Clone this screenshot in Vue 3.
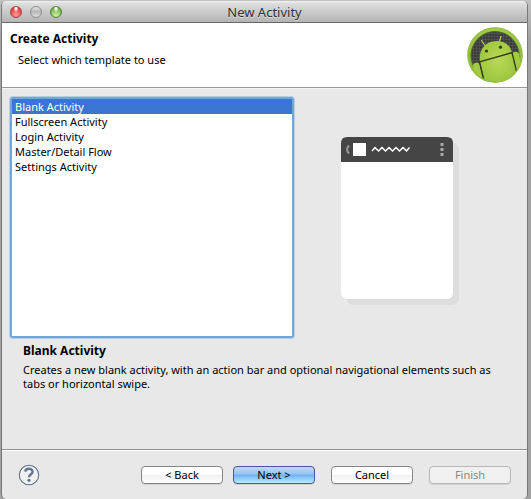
<script setup>
import { ref, computed } from 'vue'

const templates = [
  {
    name: 'Blank Activity',
    text: 'Creates a new blank activity, with an action bar and optional navigational elements such as tabs or horizontal swipe.',
  },
  { name: 'Fullscreen Activity', text: '' },
  { name: 'Login Activity', text: '' },
  { name: 'Master/Detail Flow', text: '' },
  { name: 'Settings Activity', text: '' },
]
const selected = ref('Blank Activity')
const current = computed(() => templates.find((t) => t.name === selected.value))
</script>

<template>
  <div class="desktop">
    <main class="window">
      <div class="titlebar">
        <div class="lights">
          <button class="light red" type="button"></button>
          <button class="light gray" type="button"></button>
          <button class="light green" type="button"></button>
        </div>
        <span class="title">New Activity</span>
      </div>

      <header class="header">
        <div>
          <h1 id="heading">Create Activity</h1>
          <label class="hint" for="template-list">Select which template to use</label>
        </div>
        <svg class="logo" viewBox="0 0 56 56">
          <defs>
            <linearGradient id="ring" x1="0" y1="0" x2="0" y2="1">
              <stop offset="0" stop-color="#a6cc48" />
              <stop offset="1" stop-color="#7fa92f" />
            </linearGradient>
            <radialGradient id="body" cx="0.5" cy="0.45" r="0.65">
              <stop offset="0" stop-color="#b9d958" />
              <stop offset="1" stop-color="#98c238" />
            </radialGradient>
            <pattern id="mesh" width="3" height="3" patternUnits="userSpaceOnUse">
              <rect width="3" height="3" fill="#3b3b3b" />
              <path d="M0 0H3M0 0V3" stroke="#5c5c5c" stroke-width="1" />
            </pattern>
            <clipPath id="disc"><circle cx="28" cy="28" r="27.500" /></clipPath>
          </defs>
          <circle cx="28" cy="28" r="27.500" fill="url(#ring)" />
          <circle cx="28" cy="28.500" r="24" fill="url(#mesh)" stroke="#4c6a20" />
          <g clip-path="url(#disc)">
            <path d="M13 34.500C11.500 24 17 16.500 25.500 14.500C34.500 12.500 43 16.500 45 25.500L49 42L44 56H18Z" fill="url(#body)" />
            <path d="M6 38C7 35 11 34.500 12.500 37L17 56H8Z" fill="#a3cb42" />
            <path d="M45 26.500C47 24.500 51 24.500 52 27L54 40L49.500 46Z" fill="#a3cb42" />
            <path d="M12.500 34.800L45.500 25.500M12.500 34.800L17 54M45 25.500L49.500 44" fill="none" stroke="#303b13" stroke-width="1.300" />
            <path d="M18 18.500L14.500 13.500M32.500 14L34 9.500" stroke="#a8cd45" stroke-width="1.300" stroke-linecap="round" />
          </g>
          <circle cx="19.500" cy="24" r="1.600" fill="#33400f" />
          <circle cx="33.500" cy="20.200" r="1.600" fill="#33400f" />
          <circle cx="28" cy="28" r="27" fill="none" stroke="#98bf48" stroke-width="1.400" />
        </svg>
      </header>

      <section class="content">
        <div class="chooser">
          <select id="template-list" v-model="selected" class="list" size="5">
            <option v-for="t in templates" :key="t.name" :value="t.name">{{ t.name }}</option>
          </select>
          <div class="preview">
            <svg class="phone" viewBox="0 0 118 168">
              <rect x="6" y="6" width="112" height="162" rx="6" fill="#dddddd" />
              <rect width="112" height="162" rx="6" fill="#ffffff" />
              <path d="M0 25V6Q0 0 6 0H106Q112 0 112 6V25Z" fill="#454545" />
              <path d="M8 8.500Q4 12.500 8 16.500" fill="none" stroke="#999999" stroke-width="2" />
              <rect x="12" y="6" width="13" height="13" fill="#ffffff" />
              <path d="M31 14L34 10.500L37.500 14L41 10.500L44.500 14L48 10.500L51.500 14L55 10.500L58.500 14L62 10.500L65.500 14L68.500 10.500" fill="none" stroke="#ffffff" stroke-width="1.500" />
              <path d="M99.500 6H102.500V9H99.500ZM99.500 11H102.500V14H99.500ZM99.500 16H102.500V19H99.500Z" fill="#aaaaaa" />
            </svg>
          </div>
        </div>
        <div class="about">
          <h2>{{ current.name }}</h2>
          <p>{{ current.text }}</p>
        </div>
      </section>

      <footer class="footer">
        <button class="help" type="button">
          <svg viewBox="0 0 22 22">
            <circle cx="11" cy="11" r="9.700" fill="#f1f1f1" stroke="#607187" stroke-width="1.100" />
            <path d="M7.300 7.600C7.500 3.900 14.600 3.700 14.600 7.700C14.600 10.300 11 10.200 11 13.300" fill="none" stroke="#62758f" stroke-width="2.400" />
            <circle cx="11" cy="16.300" r="1.600" fill="#62758f" />
          </svg>
        </button>
        <div class="actions">
          <div class="steps">
            <button class="btn" type="button">&lt; Back</button>
            <button class="btn primary" type="button">Next &gt;</button>
          </div>
          <button class="btn" type="button">Cancel</button>
          <button class="btn" type="button" disabled>Finish</button>
        </div>
      </footer>
    </main>
  </div>
</template>

<style>
body {
  background: #a5a5a5;
}
</style>

<style scoped>
.desktop {
  box-sizing: border-box;
  display: flex;
  min-height: 100vh;
  padding: 1px 3px 0 1px;
  background: linear-gradient(#c2c2c2, #a2a2a2 40px, #a2a2a2);
  font-family: "Lucida Grande", "Noto Sans", sans-serif;
  font-size: 11px;
  line-height: 14px;
  color: #000;
}
.window {
  display: flex;
  flex: 1;
  flex-direction: column;
  border: solid #777;
  border-width: 0 1px;
  border-radius: 5px;
  background: #e8e8e8;
  overflow: hidden;
}
.titlebar {
  display: grid;
  grid-template-columns: 1fr auto 1fr;
  align-items: center;
  height: 21px;
  padding: 0 8px;
  border-bottom: 1px solid #686868;
  background: linear-gradient(#f0f0f0, #dcdcdc 3px, #b4b4b4);
}
.lights {
  display: flex;
  gap: 8px;
}
.light {
  width: 12px;
  height: 12px;
  padding: 0;
  border: 1px solid #808080;
  border-radius: 50%;
}
.red {
  border-color: #a04444;
  background: radial-gradient(ellipse at 50% 10%, #fff 8%, transparent 35%), radial-gradient(circle at 50% 80%, #ff9a90, #e03e3e 75%);
}
.gray {
  border-color: #8a8a8a;
  background: linear-gradient(#e8e8e8, #b8b8b8 45%, #dedede);
}
.green {
  border-color: #4e7d38;
  background: radial-gradient(ellipse at 50% 10%, #fff 8%, transparent 35%), radial-gradient(circle at 50% 85%, #ccf5a0, #6fae4c 75%);
}
.title {
  font-size: 13px;
  color: #333;
  text-shadow: 0 1px 0 #ddd;
}
.header {
  display: flex;
  align-items: center;
  justify-content: space-between;
  height: 64px;
  padding: 0 4px 0 8px;
  border-bottom: 1px solid #979797;
  background: #fff;
}
h1,
h2 {
  margin: 0;
  font-size: 12px;
  line-height: 16px;
}
.hint {
  display: block;
  margin: 6px 0 12px 8px;
}
.logo {
  width: 56px;
  height: 56px;
}
.content {
  flex: 1;
  padding: 8px 20px 0 8px;
  border-top: 1px solid #f4f4f4;
}
.chooser {
  display: grid;
  grid-template-columns: 4fr 3fr;
}
.list {
  box-sizing: border-box;
  height: 241px;
  width: 100%;
  padding: 0;
  border: 2px solid #73a6d8;
  border-radius: 2px;
  outline: 1px solid #b5cee6;
  background: #fff;
  color: #000;
  font: inherit;
  overflow: hidden;
}
.list option {
  min-height: 15px;
  padding: 0 3px;
  line-height: 15px;
}
.list option:checked {
  background: #3b75d3;
  color: #fff;
}
.preview {
  display: flex;
  justify-content: center;
  padding: 40px 2px 0 0;
}
.phone {
  width: 118px;
  height: 168px;
}
.about {
  padding: 5px 0 0 13px;
}
.about p {
  margin: 4px -8px 0 0;
}
.footer {
  display: flex;
  align-items: center;
  justify-content: space-between;
  height: 49px;
  padding: 0 16px;
  border-top: 1px solid #929292;
  box-shadow: inset 0 1px 0 #fff;
}
.help {
  width: 22px;
  height: 22px;
  padding: 0;
  border: 0;
  background: none;
}
.help svg {
  display: block;
}
.actions {
  display: flex;
  gap: 16px;
}
.steps {
  display: flex;
  gap: 10px;
}
.btn {
  width: 82px;
  height: 18px;
  padding: 0;
  border: 1px solid #858585;
  border-radius: 4px;
  background: linear-gradient(#fff, #fff 45%, #f0f0f0 50%, #fff);
  box-shadow: 0 1px 0 #d2d2d2;
  color: #000;
  font: inherit;
}
.btn.primary {
  border-color: #4b5596;
  background: linear-gradient(#c2daf7, #96c1f3 45%, #6db0f1 50%, #b9ecff);
}
.btn:disabled {
  border-color: #b8b8b8;
  background: #f0f0f0;
  color: #888;
}
</style>
